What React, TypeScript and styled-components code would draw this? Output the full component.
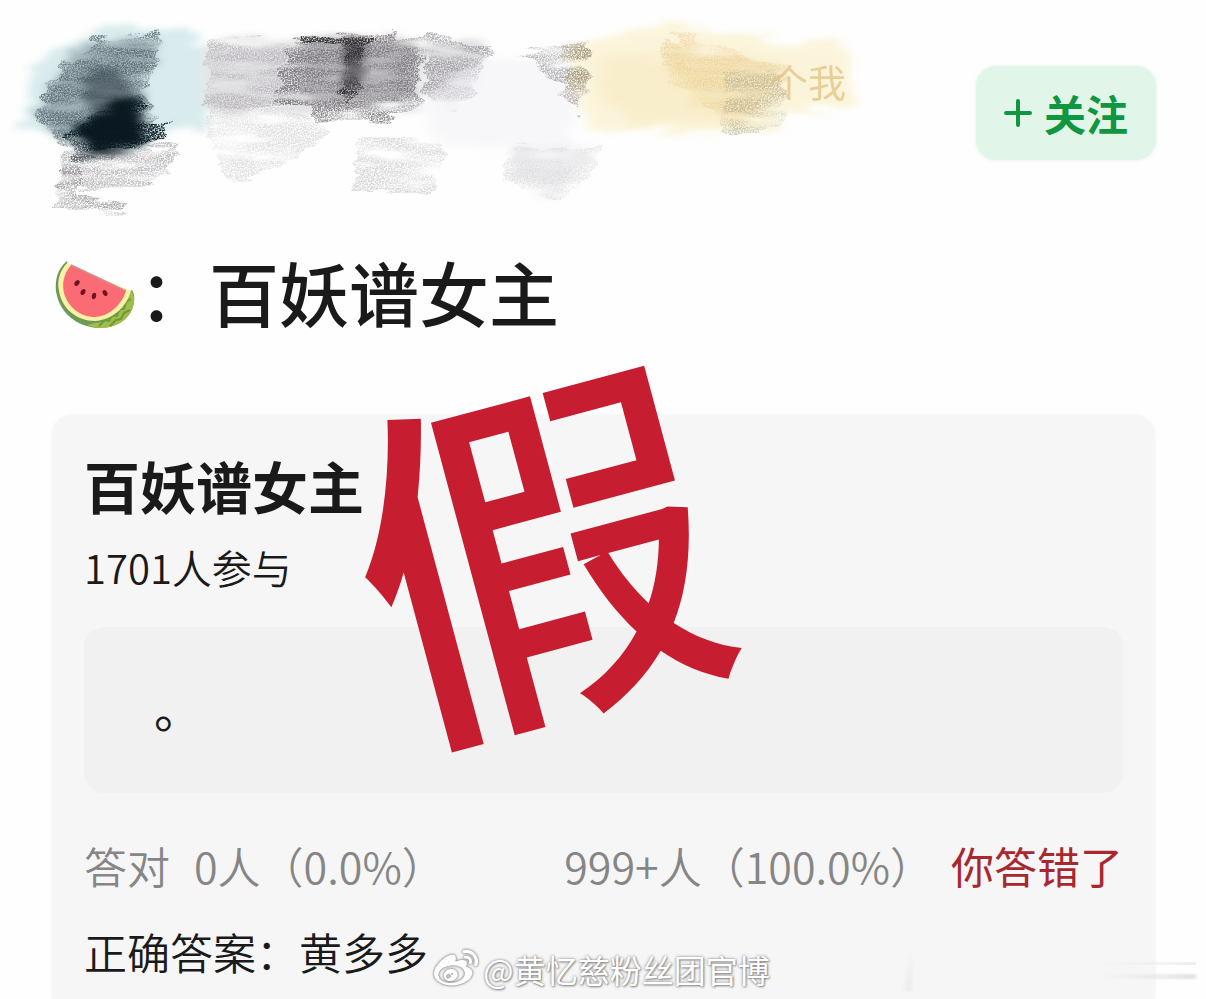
import React from "react";
import styled, { createGlobalStyle } from "styled-components";
import { FaWeibo } from "react-icons/fa";

const GlobalStyle = createGlobalStyle`
  *, *::before, *::after { box-sizing: border-box; }
  body {
    margin: 0;
    background: #fefefe;
    color: #1a1a1a;
    font-family: "Noto Sans CJK SC", "Noto Sans", sans-serif;
  }
  h1, h2, p { margin: 0; }
`;

const Page = styled.main`
  position: relative;
  display: flex;
  flex-direction: column;
  height: 100vh;
  overflow: hidden;
`;

const Header = styled.header`
  display: flex;
  justify-content: space-between;
  align-items: flex-start;
  padding-right: 50px;
`;

const Profile = styled.div`
  position: relative;
  height: 220px;
`;

const Scribble = styled.svg`
  display: block;
`;

const Nickname = styled.span`
  position: absolute;
  right: 24px;
  top: 58px;
  font-size: 38px;
  line-height: 46px;
  color: #e0c07c;
  opacity: 0.7;
`;

const FollowButton = styled.button`
  display: flex;
  align-items: center;
  gap: 12px;
  height: 94px;
  margin-top: 66px;
  padding: 0 28px;
  border: 0;
  border-radius: 20px;
  background: #e1f6e9;
  box-shadow: 0 0 4px #e1f6e9;
  color: #109640;
  font-family: inherit;
  font-size: 42px;
  font-weight: 700;
  line-height: 56px;
`;

const Title = styled.h1`
  display: flex;
  align-items: center;
  margin-top: 30px;
  padding-left: 53px;
  font-size: 70px;
  font-weight: 500;
  line-height: 84px;
`;

const Melon = styled.svg`
  flex: none;
  margin: 6px 2px 0 0;
`;

const Card = styled.article`
  position: relative;
  flex: 1 0 auto;
  margin: 81px 51px 0 52px;
  padding: 34px 32px 18px;
  border-radius: 20px 20px 0 0;
  background: #f6f6f6;
  box-shadow: 0 0 4px #f6f6f6;
`;

const CardTitle = styled.h2`
  font-size: 56px;
  font-weight: 700;
  line-height: 72px;
`;

const Joined = styled.p`
  margin-top: 22px;
  font-size: 40px;
  font-weight: 350;
  line-height: 48px;
`;

const Option = styled.div`
  height: 166px;
  margin-top: 36px;
  padding: 48px 70px;
  border-radius: 20px;
  background: #f1f1f1;
  font-size: 48px;
  line-height: 64px;
`;

const Row = styled.div`
  display: flex;
  justify-content: space-between;
  margin-top: 44px;
  font-size: 43px;
  font-weight: 350;
  line-height: 56px;
  white-space: nowrap;
`;

const Group = styled.div<{ $gap: number }>`
  display: flex;
  gap: ${(p) => p.$gap}px;
  color: #868686;
`;

const Wrong = styled.strong`
  font-weight: 400;
  color: #a8282e;
`;

const Answer = styled.p`
  margin-top: 30px;
  font-size: 43px;
  font-weight: 350;
  line-height: 56px;
`;

const Stamp = styled.span`
  position: absolute;
  left: 297px;
  top: -64px;
  font-size: 366px;
  font-weight: 500;
  line-height: 366px;
  color: #c61e30;
  transform: rotate(-15deg);
`;

const Watermark = styled.div`
  position: absolute;
  left: 0;
  right: 2px;
  bottom: 8px;
  display: flex;
  justify-content: center;
  align-items: center;
  gap: 5px;
  font-size: 32px;
  line-height: 44px;
  color: #fff;
  text-shadow: 0 0 3px #777, 1px 1px 2px #999;

  svg { filter: drop-shadow(0 0 1px #888) drop-shadow(0 0 1px #aaa); }
`;

const Smear = styled.svg`
  position: absolute;
  right: 8px;
  bottom: 4px;
`;

type Patch = { d: string; c: string; o: number; f: "wash" | "chalk" };

const patches: Patch[] = [
  { f: "wash", c: "#cde5e7", o: 0.75, d: "M28 66 90 30H190L206 52V128L165 136 130 150 50 132 14 126 30 110Z" },
  { f: "wash", c: "#7f929a", o: 0.6, d: "M38 112 68 58 92 46 160 40 150 66 140 92 150 124 150 142 90 160 60 142Z" },
  { f: "chalk", c: "#505f67", o: 0.75, d: "M33 114 68 54 74 62 92 40 164 32 158 60 144 92 158 124 160 142 90 165 60 142Z" },
  { f: "wash", c: "#36424c", o: 0.6, d: "M90 74 120 66 130 90 105 112 82 110Z" },
  { f: "wash", c: "#08161e", o: 0.97, d: "M78 124 98 110 142 94 138 114 146 142 96 153 80 143Z" },
  { f: "chalk", c: "#081820", o: 0.9, d: "M68 128 142 98 146 120 170 122 164 140 96 157 74 160Z" },
  { f: "chalk", c: "#9a969b", o: 0.6, d: "M62 152 176 148 172 178 110 190 60 188Z" },
  { f: "chalk", c: "#8c888c", o: 0.7, d: "M62 168 84 168 76 198 126 202 124 211 54 208Z" },
  { f: "wash", c: "#d0ced3", o: 0.6, d: "M205 42 420 34 422 104 310 112 205 108Z" },
  { f: "chalk", c: "#99959b", o: 0.5, d: "M206 40 282 42 300 60 300 106 206 108Z" },
  { f: "chalk", c: "#c4c2c6", o: 0.5, d: "M210 104 310 112 330 130 280 170 230 186 208 130Z" },
  { f: "wash", c: "#8d898e", o: 0.4, d: "M300 40 420 44 412 100 330 106 300 90Z" },
  { f: "chalk", c: "#68646a", o: 0.7, d: "M292 40 395 29 392 40 426 42 416 86 420 106 386 122 316 120 314 106 270 105Z" },
  { f: "chalk", c: "#252326", o: 0.85, d: "M300 37 371 35 370 42 363 54 360 80 350 102 340 96 346 42 300 42Z" },
  { f: "wash", c: "#3b383d", o: 0.65, d: "M345 38 366 38 362 76 352 94 341 86Z" },
  { f: "wash", c: "#c4c2c6", o: 0.5, d: "M426 38 490 50 474 78 450 105 426 96Z" },
  { f: "chalk", c: "#86838a", o: 0.65, d: "M426 34 494 50 478 76 470 98 450 112 424 98Z" },
  { f: "wash", c: "#f3f2f7", o: 0.6, d: "M420 104 480 60 560 56 580 100 570 150 440 142Z" },
  { f: "chalk", c: "#b5b3b8", o: 0.5, d: "M360 136 440 140 442 160 430 194 352 194Z" },
  { f: "wash", c: "#e4e3e7", o: 0.6, d: "M512 150 596 146 576 174 560 196 510 180Z" },
  { f: "chalk", c: "#cac9ce", o: 0.4, d: "M510 150 604 144 588 174 562 204 504 182Z" },
  { f: "wash", c: "#fbf4d8", o: 0.9, d: "M574 40 650 28 718 28 770 44 850 46 854 108 782 112 770 132 590 128 578 90Z" },
  { f: "chalk", c: "#96949a", o: 0.65, d: "M518 50 586 40 586 90 580 114 560 88Z" },
  { f: "chalk", c: "#a59668", o: 0.6, d: "M562 40 588 42 582 102 562 94Z" },
  { f: "wash", c: "#f0dba5", o: 0.55, d: "M666 46 730 58 784 62 770 90 740 124 700 106 664 74Z" },
  { f: "chalk", c: "#dfbd72", o: 0.4, d: "M664 42 724 58 786 66 782 100 738 132 700 102 662 72Z" },
  { f: "chalk", c: "#edbc82", o: 0.45, d: "M668 30 700 42 760 60 730 62 680 44Z" },
  { f: "wash", c: "#f7e6b8", o: 0.4, d: "M598 60 660 56 740 126 640 126 600 106Z" },
  { f: "chalk", c: "#b2af9a", o: 0.55, d: "M728 68 774 70 786 98 780 132 722 132Z" },
];

const ProfileScribble = () => (
  <Scribble width="870" height="220" viewBox="0 0 870 220" aria-hidden="true">
    <defs>
      <filter id="wash" x="-20%" y="-20%" width="140%" height="140%" colorInterpolationFilters="sRGB">
        <feTurbulence type="fractalNoise" baseFrequency="0.02 0.12" numOctaves={3} seed={4} result="n" />
        <feDisplacementMap in="SourceGraphic" in2="n" scale={30} xChannelSelector="R" yChannelSelector="G" result="m" />
        <feGaussianBlur in="m" stdDeviation="5 3" />
      </filter>
      <filter id="chalk" x="-20%" y="-20%" width="140%" height="140%" colorInterpolationFilters="sRGB">
        <feTurbulence type="fractalNoise" baseFrequency="0.02 0.1" numOctaves={3} seed={9} result="n" />
        <feDisplacementMap in="SourceGraphic" in2="n" scale={22} xChannelSelector="R" yChannelSelector="G" result="m" />
        <feTurbulence type="fractalNoise" baseFrequency="0.7" numOctaves={2} seed={2} result="g" />
        <feColorMatrix in="g" type="matrix" values="0 0 0 0 0  0 0 0 0 0  0 0 0 0 0  3 0 0 0 -0.9" result="grain" />
        <feComposite in="m" in2="grain" operator="in" result="a" />
        <feTurbulence type="fractalNoise" baseFrequency="0.015 0.08" numOctaves={3} seed={5} result="s" />
        <feColorMatrix in="s" type="matrix" values="0 0 0 0 0  0 0 0 0 0  0 0 0 0 0  3 0 0 0 -0.7" result="streak" />
        <feComposite in="a" in2="streak" operator="in" result="b" />
        <feGaussianBlur in="b" stdDeviation="0.5" />
      </filter>
    </defs>
    {patches.map((p, i) => (
      <path key={i} d={p.d} fill={p.c} opacity={p.o} filter={`url(#${p.f})`} />
    ))}
  </Scribble>
);

const Watermelon = () => (
  <Melon width="84" height="76" viewBox="0 0 84 76" role="img" aria-label="西瓜">
    <path d="M14 4C4 12 2 24 3 34C6 55 23 70 46 71C68 71 80 58 81 44Q82 38 79 33L66 40 16 12Z" fill="#6c9a56" />
    <path d="M42 66C60 65 73 52 78 34Q82 38 81 45C79 60 66 71 47 71Q40 71 34 68Z" fill="#9fbd47" />
    <path d="M46 69l6-6 4 1 3-6 5 1 2-7 5 0 2-7 5-3M57 69l6-6 5-1 3-6 6-3" fill="none" stroke="#6f9a3b" strokeWidth="2" strokeLinejoin="round" />
    <path d="M15 5C6 14 4 24 6 34C9 52 24 64 42 64C59 63 73 51 78 34L73 32 18 8Z" fill="#faf0a6" />
    <path d="M18 8C10 18 9 27 11 36C15 50 27 60 42 60C56 59 68 49 73 34Z" fill="#fb6b74" />
    <path d="M18 8 73 34" stroke="#d98787" strokeWidth="1.5" />
    <g fill="#6d1420">
      <ellipse cx="24" cy="26" rx="2.2" ry="3.2" transform="rotate(40 24 26)" />
      <ellipse cx="30" cy="35" rx="2.2" ry="3.2" transform="rotate(32 30 35)" />
      <ellipse cx="41" cy="39" rx="2.2" ry="3.2" transform="rotate(8 41 39)" />
      <ellipse cx="52" cy="36" rx="2.2" ry="3.2" transform="rotate(-28 52 36)" />
    </g>
  </Melon>
);

export default function App() {
  return (
    <>
      <GlobalStyle />
      <Page>
        <Header>
          <Profile>
            <ProfileScribble />
            <Nickname>个我</Nickname>
          </Profile>
          <FollowButton type="button">
            <svg width="28" height="28" viewBox="0 0 28 28" aria-hidden="true">
              <path d="M14 2v24M2 14h24" stroke="currentColor" strokeWidth="4" strokeLinecap="round" />
            </svg>
            关注
          </FollowButton>
        </Header>
        <Title>
          <Watermelon />
          ：百妖谱女主
        </Title>
        <Card>
          <CardTitle>百妖谱女主</CardTitle>
          <Joined>1701人参与</Joined>
          <Option>。</Option>
          <Row>
            <Group $gap={24}>
              <span>答对</span>
              <span>0人（0.0%）</span>
            </Group>
            <Group $gap={18}>
              <span>999+人（100.0%）</span>
              <Wrong>你答错了</Wrong>
            </Group>
          </Row>
          <Answer>正确答案：黄多多</Answer>
          <Stamp>假</Stamp>
        </Card>
        <Smear width="300" height="48" viewBox="0 0 300 48" aria-hidden="true">
          <defs>
            <linearGradient id="streak" x1="0" x2="1">
              <stop offset="0" stopColor="#ddd" stopOpacity="0" />
              <stop offset="1" stopColor="#d4d4d4" />
            </linearGradient>
            <filter id="soft">
              <feGaussianBlur stdDeviation="2 1" />
            </filter>
          </defs>
          <path d="M14 6v38H6Z" fill="#ececec" filter="url(#soft)" />
          <rect x="200" y="15" width="98" height="3" fill="url(#streak)" opacity="0.4" />
          <rect x="200" y="27" width="98" height="5" fill="url(#streak)" opacity="0.7" filter="url(#soft)" />
        </Smear>
        <Watermark>
          <FaWeibo size={44} aria-hidden="true" />
          <span>@黄忆慈粉丝团官博</span>
        </Watermark>
      </Page>
    </>
  );
}
